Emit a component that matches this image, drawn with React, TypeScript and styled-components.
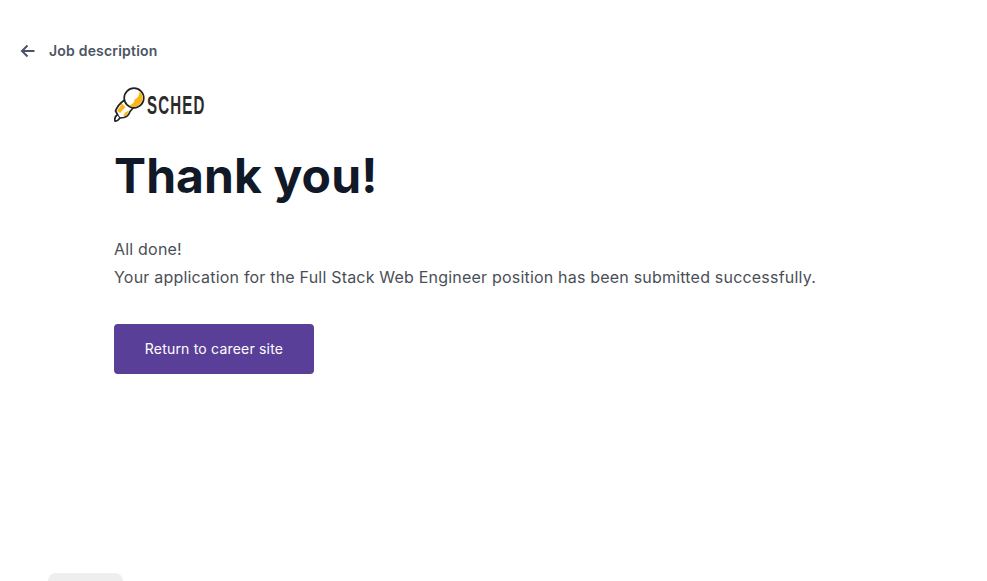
import styled, { createGlobalStyle } from "styled-components";

const GlobalCss = createGlobalStyle`
  html, body {
    margin: 0;
    height: 100%;
    background: #fff;
    overflow: hidden;
  }
  body {
    font-family: Inter, "Noto Sans", sans-serif;
    letter-spacing: 0.2px;
  }
`;

export default function App() {
  return (
    <PageCss>
      <GlobalCss />
      <BackLinkCss href="#">
        <ArrowIcon />
        <span>Job description</span>
      </BackLinkCss>
      <ContentCss>
        <LogoCss>
          <LogoMark />
          <LogoTextCss>SCHED</LogoTextCss>
        </LogoCss>
        <TitleCss>Thank you!</TitleCss>
        <MessageCss>
          All done!
          <br />
          Your application for the Full Stack Web Engineer position has been
          submitted successfully.
        </MessageCss>
        <ReturnButtonCss type="button">Return to career site</ReturnButtonCss>
      </ContentCss>
      <FloatingTabCss />
    </PageCss>
  );
}

function ArrowIcon() {
  return (
    <svg width="15" height="14" viewBox="0 0 15 14" fill="none">
      <path
        d="M14.500 7H2M7.500 1.500 2 7l5.500 5.500"
        stroke="#4a5464"
        strokeWidth="2"
      />
    </svg>
  );
}

function LogoMark() {
  return (
    <svg width="32" height="36" viewBox="0 0 32 36" fill="none">
      <path
        d="M10.500 13 C7 15.500 3 20 1.500 24 L3.500 27.500 C1.500 29 0.500 32 1 34 C2.500 34.500 4.500 33 6 31 L10 30.500 C13 30 15 27.500 16 24.500 L19 21 Z"
        fill="#fff"
        stroke="#222"
        strokeWidth="1.700"
        strokeLinejoin="round"
      />
      <circle cx="20" cy="11" r="9.800" fill="#fff" stroke="#222" strokeWidth="1.700" />
      <path
        d="M25.500 4 C28 6.500 29 9.500 28.500 12.500 C27.500 16.500 24 19.800 19.500 20 C17.500 20 16 19.200 15 18.200 C18 18 20.500 15.500 20.500 12.500 C23.500 11.500 25.500 8 25.500 4 Z"
        fill="#fbb516"
      />
      <path d="M8 16.500 L3 24 L6 26 L11.500 20 Z" fill="#fbb516" />
      <path d="M11 25.500 L15 23.500 L12.500 28.500 L9 29.500 Z" fill="#fbb516" />
      <path d="M3.500 27.500 L6 31" stroke="#222" strokeWidth="1.200" />
    </svg>
  );
}

const PageCss = styled.div`
  min-height: 100vh;
  box-sizing: border-box;
  padding: 43px 0 0 20px;
`;

const BackLinkCss = styled.a`
  display: flex;
  align-items: center;
  gap: 14px;
  height: 16px;
  font-size: 14px;
  font-weight: 600;
  line-height: 16px;
  color: #4b5563;
  text-decoration: none;
`;

const ContentCss = styled.main`
  padding: 28px 0 0 94px;
`;

const LogoCss = styled.div`
  display: flex;
  align-items: center;
  gap: 1px;
  height: 36px;
`;

const LogoTextCss = styled.span`
  display: inline-block;
  width: 58px;
  font-family: "Liberation Sans", sans-serif;
  font-size: 26px;
  font-weight: 700;
  letter-spacing: 2px;
  color: #2b2b2b;
  transform: scaleX(0.58);
  transform-origin: left center;
`;

const TitleCss = styled.h1`
  margin: 24px 0 0;
  font-size: 48px;
  line-height: 58px;
  font-weight: 700;
  letter-spacing: 0.1px;
  color: #111827;
`;

const MessageCss = styled.p`
  margin: 30px 0 0;
  font-size: 16px;
  line-height: 28px;
  color: #4a4f57;
`;

const ReturnButtonCss = styled.button`
  display: block;
  width: 200px;
  height: 50px;
  margin-top: 33px;
  padding: 0 0 2px;
  border: 0;
  border-radius: 4px;
  background: #593f98;
  color: #fff;
  font-family: inherit;
  font-size: 14px;
  font-weight: 400;
  letter-spacing: 0.2px;
`;

const FloatingTabCss = styled.div`
  position: fixed;
  left: 48px;
  bottom: -12px;
  width: 75px;
  height: 20px;
  border-radius: 8px;
  background: #eeeeee;
`;
